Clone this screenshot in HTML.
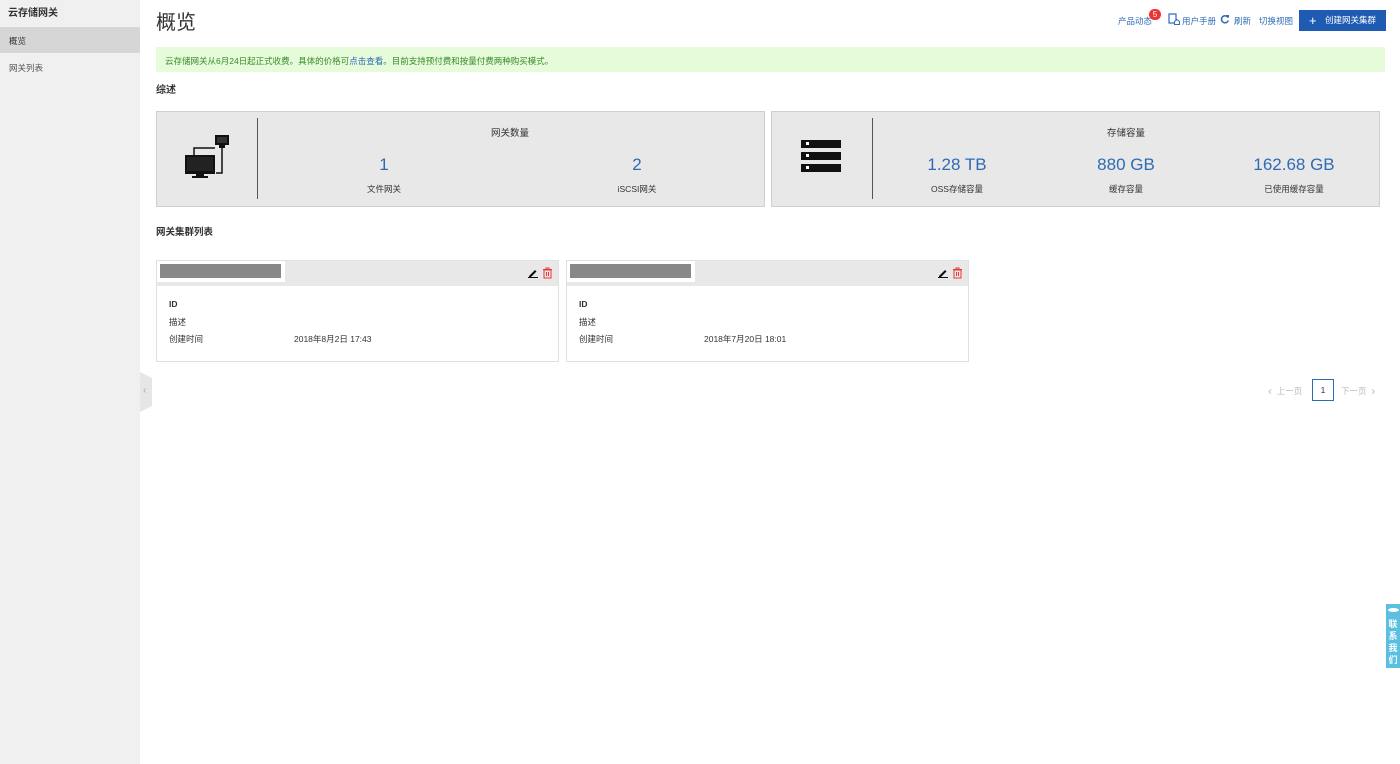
<!DOCTYPE html>
<html><head><meta charset="utf-8"><style>
*{margin:0;padding:0;box-sizing:border-box}
body{width:1400px;height:764px;overflow:hidden;background:#fff;font-family:"Liberation Sans","Noto Sans CJK SC",sans-serif;color:#333;position:relative;font-size:9px}
.abs{position:absolute}
.side{left:0;top:0;width:140px;height:764px;background:#f0f0f0}
.card{background:#e8e8e8;border:1px solid #cfcfcf}
.num{font-size:17px;color:#2e6bb5;text-align:center;width:160px}
.lbl{text-align:center;width:160px;font-size:8.5px;color:#333}
.cc{border:1px solid #e0e0e0;background:#fff}
</style></head><body>
<div class="abs side">
 <div class="abs" style="left:8px;top:4px;font-size:10px;font-weight:bold;color:#333">云存储网关</div>
 <div class="abs" style="left:0;top:27px;width:140px;height:26px;background:#d6d6d6"></div>
 <div class="abs" style="left:9px;top:35px;font-size:8.5px;color:#333">概览</div>
 <div class="abs" style="left:9px;top:62px;font-size:8.5px;color:#555">网关列表</div>
</div>
<div class="abs" style="left:140px;top:372px;width:12px;height:40px;background:#e6e6e6;clip-path:polygon(0 0,100% 15%,100% 85%,0 100%)"></div>
<div class="abs" style="left:143px;top:385px;font-size:10px;color:#aaa">‹</div>

<div class="abs" style="left:156px;top:6px;font-size:20px;color:#333">概览</div>

<div class="abs" style="left:1118px;top:15px;font-size:8.5px;color:#2e6bb5">产品动态</div>
<div class="abs" style="left:1149px;top:9px;width:12px;height:11px;border-radius:6px;background:#e33;color:#fff;font-size:8px;text-align:center;line-height:11px">5</div>
<svg class="abs" style="left:1168px;top:13px" width="12" height="12" viewBox="0 0 12 12"><rect x="1" y="1" width="7" height="9" fill="none" stroke="#2e6bb5" stroke-width="1.2"/><path d="M6.5 8.5l2.5-2 2.5 2v3h-5z" fill="#fff" stroke="#2e6bb5"/></svg>
<div class="abs" style="left:1182px;top:15px;font-size:8.5px;color:#2e6bb5">用户手册</div>
<svg class="abs" style="left:1220px;top:14px" width="10" height="10" viewBox="0 0 10 10"><path d="M8 3.5A3.5 3.5 0 1 0 8.3 6.5" fill="none" stroke="#2e6bb5" stroke-width="1.5"/><path d="M6 1h3v3z" fill="#2e6bb5"/></svg>
<div class="abs" style="left:1234px;top:15px;font-size:8.5px;color:#2e6bb5">刷新</div>
<div class="abs" style="left:1259px;top:15px;font-size:8.5px;color:#2e6bb5">切换视图</div>
<div class="abs" style="left:1299px;top:10px;width:87px;height:21px;background:#1f5bb3;color:#fff;font-size:8.5px;line-height:21px"><span style="position:absolute;left:10px;font-size:13px">+</span><span style="position:absolute;left:26px">创建网关集群</span></div>

<div class="abs" style="left:156px;top:47px;width:1229px;height:25px;background:#e6fbd9"></div>
<div class="abs" style="left:165px;top:55px;font-size:8.5px;color:#3a8a2a">云存储网关从6月24日起正式收费。具体的价格可<span style="color:#2e6bb5">点击查看</span>。目前支持预付费和按量付费两种购买模式。</div>

<div class="abs" style="left:156px;top:81px;font-size:10px;font-weight:bold">综述</div>

<div class="abs card" style="left:156px;top:111px;width:609px;height:96px"></div>
<svg class="abs" style="left:184px;top:134px" width="48" height="45" viewBox="0 0 48 45"><rect x="31" y="1" width="14" height="10" fill="#111"/><rect x="33" y="3" width="10" height="6" fill="#333"/><rect x="35" y="11" width="6" height="3" fill="#111"/><path d="M10 26V14h21" fill="none" stroke="#111" stroke-width="1.5"/><path d="M38 14v25h-6" fill="none" stroke="#111" stroke-width="1.5"/><rect x="1" y="21" width="30" height="19" fill="#111"/><rect x="3" y="23" width="26" height="14" fill="#222"/><rect x="12" y="40" width="8" height="2" fill="#111"/><rect x="8" y="42" width="16" height="2" fill="#111"/></svg>
<div class="abs" style="left:257px;top:118px;width:1px;height:81px;background:#555"></div>
<div class="abs" style="left:430px;top:125px;width:160px;text-align:center;font-size:9.5px">网关数量</div>
<div class="abs num" style="left:304px;top:155px">1</div>
<div class="abs lbl" style="left:304px;top:183px">文件网关</div>
<div class="abs num" style="left:557px;top:155px">2</div>
<div class="abs lbl" style="left:557px;top:183px">iSCSI网关</div>

<div class="abs card" style="left:771px;top:111px;width:609px;height:96px"></div>
<svg class="abs" style="left:801px;top:140px" width="42" height="33" viewBox="0 0 42 33"><g fill="#111"><rect x="0" y="0" width="40" height="8"/><rect x="0" y="12" width="40" height="8"/><rect x="0" y="24" width="40" height="8"/></g><g fill="#fff"><rect x="5" y="2" width="3" height="3"/><rect x="5" y="14" width="3" height="3"/><rect x="5" y="26" width="3" height="3"/></g></svg>
<div class="abs" style="left:872px;top:118px;width:1px;height:81px;background:#555"></div>
<div class="abs" style="left:1046px;top:125px;width:160px;text-align:center;font-size:9.5px">存储容量</div>
<div class="abs num" style="left:877px;top:155px">1.28 TB</div>
<div class="abs lbl" style="left:877px;top:183px">OSS存储容量</div>
<div class="abs num" style="left:1046px;top:155px">880 GB</div>
<div class="abs lbl" style="left:1046px;top:183px">缓存容量</div>
<div class="abs num" style="left:1214px;top:155px">162.68 GB</div>
<div class="abs lbl" style="left:1214px;top:183px">已使用缓存容量</div>

<div class="abs" style="left:156px;top:224px;font-size:9.5px;font-weight:bold">网关集群列表</div>

<div class="abs cc" style="left:156px;top:260px;width:403px;height:102px"><div style="height:25px;background:#e8e8e8"></div></div>
<div class="abs" style="left:157px;top:261px;width:128px;height:21px;background:#fff"></div>
<div class="abs" style="left:160px;top:264px;width:121px;height:14px;background:#888"></div>
<svg class="abs" style="left:528px;top:268px" width="10" height="10" viewBox="0 0 10 10"><path d="M1 8L7 2l1.5 1.5L2.5 9.5H1z" fill="#111"/><rect x="0" y="9" width="10" height="1" fill="#111"/></svg>
<svg class="abs" style="left:542px;top:267px" width="11" height="12" viewBox="0 0 11 12"><path d="M1 2.5h9M4 2.5V1h3v1.5" stroke="#e33" fill="none"/><rect x="2" y="3" width="7" height="8" fill="none" stroke="#e33"/><path d="M4.5 5v4M6.5 5v4" stroke="#e33"/></svg>
<div class="abs" style="left:169px;top:299px;font-weight:bold;font-size:8.5px">ID</div>
<div class="abs" style="left:169px;top:316px;font-size:8.5px">描述</div>
<div class="abs" style="left:169px;top:333px;font-size:8.5px">创建时间</div>
<div class="abs" style="left:294px;top:333px;font-size:8.5px">2018年8月2日 17:43</div>

<div class="abs cc" style="left:566px;top:260px;width:403px;height:102px"><div style="height:25px;background:#e8e8e8"></div></div>
<div class="abs" style="left:567px;top:261px;width:128px;height:21px;background:#fff"></div>
<div class="abs" style="left:570px;top:264px;width:121px;height:14px;background:#888"></div>
<svg class="abs" style="left:938px;top:268px" width="10" height="10" viewBox="0 0 10 10"><path d="M1 8L7 2l1.5 1.5L2.5 9.5H1z" fill="#111"/><rect x="0" y="9" width="10" height="1" fill="#111"/></svg>
<svg class="abs" style="left:952px;top:267px" width="11" height="12" viewBox="0 0 11 12"><path d="M1 2.5h9M4 2.5V1h3v1.5" stroke="#e33" fill="none"/><rect x="2" y="3" width="7" height="8" fill="none" stroke="#e33"/><path d="M4.5 5v4M6.5 5v4" stroke="#e33"/></svg>
<div class="abs" style="left:579px;top:299px;font-weight:bold;font-size:8.5px">ID</div>
<div class="abs" style="left:579px;top:316px;font-size:8.5px">描述</div>
<div class="abs" style="left:579px;top:333px;font-size:8.5px">创建时间</div>
<div class="abs" style="left:704px;top:333px;font-size:8.5px">2018年7月20日 18:01</div>

<div class="abs" style="left:1268px;top:383px;font-size:8.5px;color:#bbb"><span style="font-size:12px;position:relative;top:1px">‹</span> &nbsp;上一页</div>
<div class="abs" style="left:1312px;top:379px;width:22px;height:22px;border:1px solid #2e6bb5;text-align:center;line-height:20px;font-size:8.5px">1</div>
<div class="abs" style="left:1341px;top:383px;font-size:8.5px;color:#bbb">下一页 &nbsp;<span style="font-size:12px;position:relative;top:1px">›</span></div>

<div class="abs" style="left:1386px;top:604px;width:14px;height:64px;background:#5bbfe0;color:#fff;font-size:9px;font-weight:bold;padding-top:14px;text-align:center;line-height:12px">联<br>系<br>我<br>们</div>
<div class="abs" style="left:1388px;top:608px;width:11px;height:4px;border-radius:50%;background:#fff"></div>
</body></html>
